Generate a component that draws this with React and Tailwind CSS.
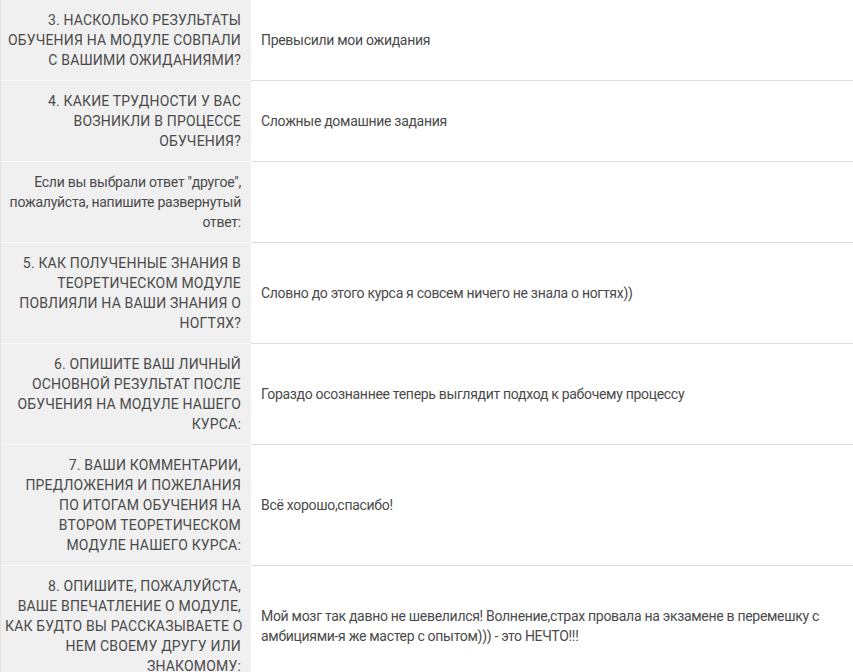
import React from 'react';

const rows = [
  {
    q: ['3. НАСКОЛЬКО РЕЗУЛЬТАТЫ', 'ОБУЧЕНИЯ НА МОДУЛЕ СОВПАЛИ', 'С ВАШИМИ ОЖИДАНИЯМИ?'],
    a: ['Превысили мои ожидания'],
  },
  {
    q: ['4. КАКИЕ ТРУДНОСТИ У ВАС', 'ВОЗНИКЛИ В ПРОЦЕССЕ', 'ОБУЧЕНИЯ?'],
    a: ['Сложные домашние задания'],
  },
  {
    q: ['Если вы выбрали ответ "другое",', 'пожалуйста, напишите развернутый', 'ответ:'],
    a: [],
    lower: true,
  },
  {
    q: ['5. КАК ПОЛУЧЕННЫЕ ЗНАНИЯ В', 'ТЕОРЕТИЧЕСКОМ МОДУЛЕ', 'ПОВЛИЯЛИ НА ВАШИ ЗНАНИЯ О', 'НОГТЯХ?'],
    a: ['Словно до этого курса я совсем ничего не знала о ногтях))'],
  },
  {
    q: ['6. ОПИШИТЕ ВАШ ЛИЧНЫЙ', 'ОСНОВНОЙ РЕЗУЛЬТАТ ПОСЛЕ', 'ОБУЧЕНИЯ НА МОДУЛЕ НАШЕГО', 'КУРСА:'],
    a: ['Гораздо осознаннее теперь выглядит подход к рабочему процессу'],
  },
  {
    q: ['7. ВАШИ КОММЕНТАРИИ,', 'ПРЕДЛОЖЕНИЯ И ПОЖЕЛАНИЯ', 'ПО ИТОГАМ ОБУЧЕНИЯ НА', 'ВТОРОМ ТЕОРЕТИЧЕСКОМ', 'МОДУЛЕ НАШЕГО КУРСА:'],
    a: ['Всё хорошо,спасибо!'],
  },
  {
    q: ['8. ОПИШИТЕ, ПОЖАЛУЙСТА,', 'ВАШЕ ВПЕЧАТЛЕНИЕ О МОДУЛЕ,', 'КАК БУДТО ВЫ РАССКАЗЫВАЕТЕ О', 'НЕМ СВОЕМУ ДРУГУ ИЛИ', 'ЗНАКОМОМУ:'],
    a: [
      'Мой мозг так давно не шевелился! Волнение,страх провала на экзамене в перемешку с',
      'амбициями-я же мастер с опытом))) - это НЕЧТО!!!',
    ],
  },
];

const App = () => {
  return (
    <div className="w-[853px] h-[672px] overflow-hidden bg-white font-['Roboto',sans-serif] text-[14px] leading-[20px] text-[#4a4a4a]">
      <div className="-mt-px">
        {rows.map((row, i) => (
          <div key={i} className="flex">
            {/* Question */}
            <div
              className={`w-[251px] shrink-0 bg-[#f0f0f0] border-t border-[#fafafa] border-l border-l-[#e2e2e2] py-[10px] pr-[10px] pl-[4px] text-right ${
                row.lower ? 'tracking-[-0.25px]' : 'tracking-[0.18px]'
              }`}
            >
              {row.q.map((line, j) => (
                <div key={j} className="whitespace-nowrap">{line}</div>
              ))}
            </div>
            {/* Answer */}
            <div className="flex-1 flex flex-col justify-center border-t border-[#dedede] px-[10px] py-[10px] tracking-[-0.3px]">
              {row.a.map((line, j) => (
                <div key={j} className="whitespace-nowrap">{line}</div>
              ))}
            </div>
          </div>
        ))}
      </div>
    </div>
  );
};

export default App;
